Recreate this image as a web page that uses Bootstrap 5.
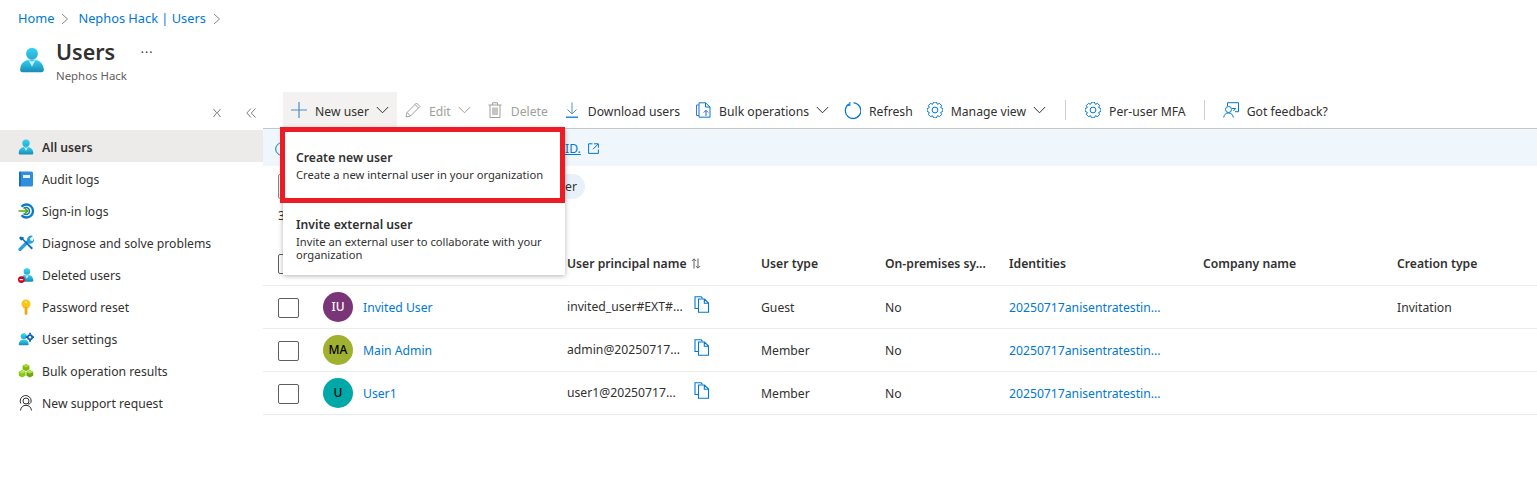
<!DOCTYPE html>
<html lang="en">
<head>
    <meta charset="UTF-8">
    <meta name="viewport" content="width=device-width, initial-scale=1.0">
    <title>Users - Nephos Hack</title>
    <link href="https://cdn.jsdelivr.net/npm/bootstrap@5.3.2/dist/css/bootstrap.min.css" rel="stylesheet">
    <style>
        html, body {
            height: 100%;
            overflow: hidden;
        }
        body {
            font-family: "Noto Sans", "Open Sans", sans-serif;
            font-size: 12.2px;
            color: #323130;
        }
        a {
            color: #0078d4;
            text-decoration: none;
        }
        .icon-defs {
            position: absolute;
            width: 0;
            height: 0;
        }
        .page-head {
            height: 92px;
            padding: 9px 18px 0;
        }
        .page-head .breadcrumb {
            --bs-breadcrumb-margin-bottom: 0;
            --bs-breadcrumb-item-padding-x: 0;
            --bs-breadcrumb-divider: "";
            line-height: 18px;
            font-size: 12.8px;
        }
        .page-head .breadcrumb-item + .breadcrumb-item::before {
            content: none;
        }
        .crumb-sep {
            width: 8px;
            height: 12px;
            margin: 0 9px 0 7px;
            vertical-align: -2px;
        }
        .head-row {
            margin-top: 11px;
            gap: 11px;
        }
        .head-icon {
            width: 26px;
            height: 30px;
            margin: 7px 0 0 1px;
        }
        .head-title {
            font-size: 21.5px;
            font-weight: 600;
            line-height: 28px;
            margin: 0;
        }
        .head-sub {
            color: #605e5c;
            font-size: 11.4px;
            line-height: 19px;
        }
        .head-more {
            margin: 4px 0 0 3px;
            line-height: 22px;
            font-size: 12px;
            letter-spacing: 1px;
        }
        .side-col {
            width: 263px;
            flex: none;
        }
        .side-tools {
            height: 38px;
            padding: 4px 7px 0 0;
            gap: 24px;
        }
        .side-tools svg {
            width: 10px;
            height: 10px;
        }
        .side-nav .list-group-item {
            height: 32px;
            border: 0;
            padding: 4px 0 0 18px;
            gap: 8px;
            color: #323130;
            background: transparent;
        }
        .side-nav .list-group-item.active {
            background: #edebe9;
            font-weight: 600;
        }
        .side-nav svg {
            width: 16px;
            height: 16px;
            flex: none;
            margin-top: -3px;
        }
        .main-col {
            min-width: 0;
        }
        .cmd-bar {
            height: 37px;
            border-bottom: 1px solid #c8c6c4;
        }
        .cmd-new {
            margin-left: 20px;
        }
        .cmd-bar .btn {
            --bs-btn-border-width: 0;
            --bs-btn-border-radius: 0;
            --bs-btn-font-size: 12.2px;
            --bs-btn-color: #323130;
            --bs-btn-disabled-color: #a19f9d;
            --bs-btn-disabled-opacity: 1;
            height: 36px;
            padding: 4px 8px 0;
            gap: 8px;
            white-space: nowrap;
        }
        .cmd-bar .btn.is-open {
            background: #f3f2f1;
        }
        .cmd-bar .btn svg {
            width: 16px;
            height: 16px;
            flex: none;
            margin-top: -4px;
        }
        .cmd-bar .btn svg.chev {
            width: 13px;
            height: 8px;
            margin-left: -1px;
        }
        .cmd-bar .btn.cmd-bulk {
            margin-left: -1px;
        }
        .cmd-bar .btn.cmd-refresh {
            margin-left: -1px;
        }
        .cmd-bar .btn.cmd-refresh svg {
            width: 17px;
            height: 17px;
        }
        .cmd-bar .btn.cmd-manage {
            margin-left: -2px;
        }
        .cmd-sep {
            width: 1px;
            height: 20px;
            background: #d2d0ce;
            margin: 0 11px;
        }
        .cmd-sep.is-narrow {
            margin: 0 10px;
        }
        .new-menu {
            width: 282px;
            height: 147px;
            top: 36px;
            left: 0;
            padding: 0;
            border: 0;
            border-radius: 0;
            box-shadow: 0 1px 5px rgba(0, 0, 0, .3);
            z-index: 5;
        }
        .new-menu .dropdown-item {
            padding: 0 13px;
            color: #323130;
            white-space: normal;
        }
        .new-menu .dropdown-item:first-child {
            height: 74px;
            padding-top: 21px;
        }
        .new-menu .dropdown-item:last-child {
            height: 73px;
            padding-top: 14px;
        }
        .menu-title {
            display: block;
            font-size: 12.2px;
            font-weight: 600;
            line-height: 18px;
        }
        .menu-desc {
            display: block;
            font-size: 11.2px;
            line-height: 12.5px;
            margin-top: 2px;
        }
        .red-box {
            position: absolute;
            top: 35px;
            left: -3px;
            width: 285px;
            height: 76px;
            border: 5px solid #ed1c24;
            z-index: 6;
            pointer-events: none;
        }
        .info-bar {
            height: 37px;
            background: #eff6fc;
            padding: 2px 0 0 12px;
        }
        .info-bar a {
            text-decoration: underline;
            margin: 2px 7px 0 276px;
        }
        .info-bar svg {
            width: 14px;
            height: 14px;
            flex: none;
        }
        .info-bar svg.ext-link {
            width: 11px;
            height: 11px;
        }
        .filter-row {
            margin: 8px 0 0 15px;
            height: 25px;
            gap: 12px;
        }
        .search-box {
            width: 187px;
            height: 25px;
            border: 1px solid #8a8886;
            border-radius: 2px;
        }
        .filter-pill {
            width: 108px;
            height: 25px;
            border-radius: 13px;
            background: #e8f1fa;
            padding-right: 8px;
            text-align: right;
            line-height: 25px;
        }
        .found-text {
            margin: 8px 0 0 15px;
            line-height: 18px;
        }
        .user-table {
            table-layout: fixed;
            width: 1274px;
            margin: 16px 0 0;
            --bs-table-color: #323130;
        }
        .user-table th,
        .user-table td {
            padding: 3px 0 0;
            vertical-align: middle;
            white-space: nowrap;
            border-bottom: 1px solid #edebe9;
        }
        .user-table th {
            height: 44px;
            font-weight: 600;
        }
        .user-table td {
            height: 43px;
        }
        .user-table th:first-child,
        .user-table td:first-child {
            padding-left: 15px;
        }
        .user-table .form-check-input {
            display: block;
            width: 21px;
            height: 20px;
            margin: 0;
            border: 1px solid #605e5c;
            border-radius: 2px;
        }
        .col-check { width: 60px; }
        .col-name { width: 244px; }
        .col-upn { width: 194px; }
        .col-type { width: 124px; }
        .col-sync { width: 124px; }
        .col-ident { width: 194px; }
        .col-company { width: 194px; }
        .user-avatar {
            width: 30px;
            height: 30px;
            border-radius: 50%;
            margin: -3px 10px 0 0;
            font-size: 12px;
            font-weight: 500;
            flex: none;
        }
        .av-purple { background: #7a3578; color: #fff; }
        .av-olive { background: #a0b12f; color: #000; }
        .av-teal { background: #00a8a8; color: #000; }
        .upn-text {
            width: 127px;
            margin-top: -2px;
        }
        .copy-icon {
            width: 16px;
            height: 17px;
            margin-top: -6px;
        }
        .sort-icon {
            width: 10px;
            height: 11px;
            margin-left: 4px;
            vertical-align: -1px;
        }
    </style>
</head>
<body>
    <svg class="icon-defs" aria-hidden="true">
        <defs>
            <linearGradient id="gBody" x1="0" y1="0" x2="0" y2="1">
                <stop offset="0" stop-color="#32d4f5"/>
                <stop offset="1" stop-color="#198ab3"/>
            </linearGradient>
            <linearGradient id="gHead" x1="0" y1="0" x2="0" y2="1">
                <stop offset="0" stop-color="#32d4f5"/>
                <stop offset="1" stop-color="#2aa8d0"/>
            </linearGradient>
            <symbol id="i-person" viewBox="0 0 18 18">
                <path d="M15.7 17.5c.8 0 1.5-.7 1.5-1.5v-.5C16.6 11.3 14.4 8.6 9 8.6s-7.8 2.6-8.2 6.9V16c0 .9.7 1.5 1.4 1.5z" fill="url(#gBody)"/>
                <circle cx="9" cy="4.7" r="4.1" fill="url(#gHead)"/>
                <path d="M6.6 9 9 13.6 11.4 9 9 10z" fill="#fff" opacity=".75"/>
            </symbol>
            <symbol id="i-gear" viewBox="1 1 16 16">
                <polygon points="16.88,10.39 14.73,11.37 15.55,13.59 13.59,15.55 11.37,14.73 10.39,16.88 7.61,16.88 6.63,14.73 4.41,15.55 2.45,13.59 3.27,11.37 1.12,10.39 1.12,7.61 3.27,6.63 2.45,4.41 4.41,2.45 6.63,3.27 7.61,1.12 10.39,1.12 11.37,3.27 13.59,2.45 15.55,4.41 14.73,6.63 16.88,7.61" fill="none" stroke="#0078d4" stroke-width="1" stroke-linejoin="round"/>
                <circle cx="9" cy="9" r="2.9" fill="none" stroke="#0078d4" stroke-width="1"/>
            </symbol>
            <symbol id="i-chev" viewBox="0 0 13 8">
                <path d="M.8 1 6.5 6.8 12.2 1" fill="none" stroke="currentColor" stroke-width="1"/>
            </symbol>
            <symbol id="i-copy" viewBox="0 0 16 17">
                <path d="M4.500 12.500H1V.8h6.200l1.300 1.600" fill="none" stroke="#0078d4" stroke-width="1.100"/>
                <path d="M4.500 3h6l4 4v9.300h-10zM10.300 3v4.200h4.200" fill="none" stroke="#0078d4" stroke-width="1.100"/>
            </symbol>
        </defs>
    </svg>

    <header class="page-head">
        <nav aria-label="breadcrumb">
            <ol class="breadcrumb">
                <li class="breadcrumb-item"><a href="#">Home</a><svg class="crumb-sep" viewBox="0 0 8 12"><path d="M1 1l5.500 5L1 11" fill="none" stroke="#8a8886"/></svg></li>
                <li class="breadcrumb-item"><a href="#">Nephos Hack | Users</a><svg class="crumb-sep" viewBox="0 0 8 12"><path d="M1 1l5.500 5L1 11" fill="none" stroke="#8a8886"/></svg></li>
            </ol>
        </nav>
        <div class="d-flex head-row">
            <svg class="head-icon" viewBox="0 0 18 18"><use href="#i-person"/></svg>
            <div>
                <h1 class="head-title">Users</h1>
                <div class="head-sub">Nephos Hack</div>
            </div>
            <div class="head-more">···</div>
        </div>
    </header>

    <div class="d-flex">
        <aside class="side-col">
            <div class="side-tools d-flex align-items-center justify-content-end">
                <svg viewBox="0 0 10 10"><path d="M1.500 1l3.200 3.800L1.500 9M8.500 1 5.300 4.800 8.500 9" fill="none" stroke="#605e5c" stroke-width=".8"/></svg>
                <svg viewBox="0 0 10 10"><path d="M5 .5.8 5 5 9.500M9.500.5 5.300 5l4.200 4.500" fill="none" stroke="#605e5c" stroke-width=".8"/></svg>
            </div>
            <div class="list-group list-group-flush side-nav">
                <a href="#" class="list-group-item active d-flex align-items-center">
                    <svg viewBox="0 0 18 18"><use href="#i-person"/></svg>All users
                </a>
                <a href="#" class="list-group-item d-flex align-items-center">
                    <svg viewBox="0 0 16 16"><rect x="1" y=".5" width="14" height="15" rx="1.500" fill="#2f8fdc"/><rect x="1" y=".5" width="2" height="15" rx="1" fill="#1a6dba"/><rect x="5" y="4" width="7" height="3" fill="#e8f3fb"/></svg>Audit logs
                </a>
                <a href="#" class="list-group-item d-flex align-items-center">
                    <svg viewBox="0 0 16 16"><path d="M3.500 3.800A6.500 6.500 0 1 1 3.500 12.200" fill="none" stroke="#0a78cc" stroke-width="2.300"/><path d="M5.500 5.600a3.500 3.500 0 1 1 0 4.800" fill="none" stroke="#0a78cc" stroke-width="1.400"/><path d="M.5 8h8.500M6.500 5l3.200 3-3.200 3" fill="none" stroke="#5ea80d" stroke-width="1.700"/></svg>Sign-in logs
                </a>
                <a href="#" class="list-group-item d-flex align-items-center">
                    <svg viewBox="0 0 16 16"><path d="M2 14.500 10 6.500" stroke="#2a9fd8" stroke-width="3.200" stroke-linecap="round" fill="none"/><path d="M9 5a4.200 4.200 0 0 1 6-4l-3 2.500.5 2L14.500 6 16 3.500A4.200 4.200 0 0 1 10.500 8.500z" fill="#2a9fd8"/><path d="M2.500 1.500 1 3l2 2.500 1.500-.5 9 9.500 1.500-1.500-9.500-9 .5-1.500z" fill="#0a6fc2"/></svg>Diagnose and solve problems
                </a>
                <a href="#" class="list-group-item d-flex align-items-center">
                    <svg viewBox="0 0 18 18"><use href="#i-person" x="2" width="16"/><circle cx="3.800" cy="14.200" r="3.800" fill="#d5001c"/><rect x="1.800" y="13.500" width="4" height="1.400" fill="#fff"/></svg>Deleted users
                </a>
                <a href="#" class="list-group-item d-flex align-items-center">
                    <svg viewBox="0 0 16 16"><circle cx="8" cy="5" r="4.500" fill="#fcc419"/><path d="M6.600 8h2.800v7.200L8 16l-1.400-.8z" fill="#f5a70e"/><circle cx="8" cy="3.200" r="1" fill="#fff3c4"/></svg>Password reset
                </a>
                <a href="#" class="list-group-item d-flex align-items-center">
                    <svg viewBox="0 0 18 18"><path d="M11 16c.6 0 1-.4 1-1-.4-3.500-2-5.500-5.500-5.500S1.200 11.500.8 15c0 .6.400 1 1 1z" fill="url(#gBody)"/><circle cx="6.500" cy="6" r="3.400" fill="url(#gHead)"/><g fill="#0a5fb8"><circle cx="13.500" cy="7" r="3.400"/><path d="M12.500 2h2v2h-2zM12.500 10h2v2h-2zM8.700 6h2v2h-2zM16 6h2v2h-2z"/></g><circle cx="13.500" cy="7" r="1.400" fill="#fff"/></svg>User settings
                </a>
                <a href="#" class="list-group-item d-flex align-items-center">
                    <svg viewBox="0 0 18 18"><path d="M9 1l3.800 2v4.300L9 9.300 5.200 7.300V3z" fill="#7fba00"/><path d="M4.700 8 8.500 10v4.300L4.700 16.300.9 14.300V10z" fill="#86c91a"/><path d="M13.300 8l3.800 2v4.300l-3.800 2-3.800-2V10z" fill="#6fa80a"/><path d="M5.200 3 9 5l3.800-2L9 1z" fill="#a5dc3b"/><path d="M.9 10l3.800 2 3.800-2-3.800-2zM9.500 10l3.800 2 3.800-2-3.800-2z" fill="#b0e04e"/></svg>Bulk operation results
                </a>
                <a href="#" class="list-group-item d-flex align-items-center">
                    <svg viewBox="0 0 16 16" fill="none" stroke="#323130"><circle cx="8" cy="6" r="3"/><path d="M2.800 8.500A5.500 5.500 0 1 1 13.200 6M2.500 15.500C3 12 5 10.300 8 10.300s5 1.700 5.500 5.200M13.200 6c0 2-1.500 3-3.200 3"/></svg>New support request
                </a>
            </div>
        </aside>

        <main class="main-col flex-grow-1">
            <div class="cmd-bar d-flex align-items-center">
                <div class="dropdown position-relative cmd-new">
                    <button class="btn is-open d-flex align-items-center" type="button">
                        <svg viewBox="0 0 16 16"><path d="M8 0v16M0 8h16" stroke="#4a8fcb" stroke-width="1.200" fill="none"/></svg>
                        <span>New user</span>
                        <svg class="chev"><use href="#i-chev"/></svg>
                    </button>
                    <div class="dropdown-menu show new-menu">
                        <a class="dropdown-item" href="#">
                            <span class="menu-title">Create new user</span>
                            <span class="menu-desc">Create a new internal user in your organization</span>
                        </a>
                        <a class="dropdown-item" href="#">
                            <span class="menu-title">Invite external user</span>
                            <span class="menu-desc">Invite an external user to collaborate with your organization</span>
                        </a>
                    </div>
                    <div class="red-box"></div>
                </div>
                <button class="btn d-flex align-items-center" type="button" disabled>
                    <svg viewBox="0 0 16 16" fill="none" stroke="#a19f9d"><path d="M1 15l1-4.500L11.500 1l3.500 3.500L5.500 14zM2 10.500 5.500 14M10 2.500 13.500 6"/></svg>
                    <span>Edit</span>
                    <svg class="chev"><use href="#i-chev"/></svg>
                </button>
                <button class="btn d-flex align-items-center" type="button" disabled>
                    <svg viewBox="0 0 16 16" fill="none" stroke="#a19f9d"><path d="M1.500 3h13M3 3v12.500h10V3M5.500 3V.8h5V3"/><path d="M6 5.500v7.500M8 5.500v7.500M10 5.500v7.500" stroke-width="1.200"/></svg>
                    <span>Delete</span>
                </button>
                <button class="btn d-flex align-items-center" type="button">
                    <svg viewBox="0 0 16 16" fill="none" stroke="#0078d4"><path d="M8 .5v11M3.500 7.500 8 12l4.500-4.500" stroke="#5a8fc8"/><path d="M2 15.200h12" stroke-width="1.300"/></svg>
                    <span>Download users</span>
                </button>
                <button class="btn cmd-bulk d-flex align-items-center" type="button">
                    <svg viewBox="0 0 16 16" fill="none" stroke="#0078d4"><path d="M4 .8h6.500L15 5v10.200H4z"/><path d="M10.500.8V5H15"/><path d="M4 3H1.500v10.500H4" stroke="#4a6fd8"/><path d="M11 14V8.500M8.800 10.500 11 8.300l2.200 2.200" stroke="#2a5fc8"/></svg>
                    <span>Bulk operations</span>
                    <svg class="chev"><use href="#i-chev"/></svg>
                </button>
                <button class="btn cmd-refresh d-flex align-items-center" type="button">
                    <svg viewBox="0 0 16 16" fill="none" stroke="#0078d4" stroke-width="1.200"><path d="M5 1.800A7.300 7.300 0 1 0 9 .9"/><path d="M5.500 0v3H2.500" stroke-width="1"/></svg>
                    <span>Refresh</span>
                </button>
                <button class="btn cmd-manage d-flex align-items-center" type="button">
                    <svg><use href="#i-gear"/></svg>
                    <span>Manage view</span>
                    <svg class="chev"><use href="#i-chev"/></svg>
                </button>
                <span class="cmd-sep"></span>
                <button class="btn d-flex align-items-center" type="button">
                    <svg><use href="#i-gear"/></svg>
                    <span>Per-user MFA</span>
                </button>
                <span class="cmd-sep is-narrow"></span>
                <button class="btn d-flex align-items-center" type="button">
                    <svg viewBox="0 0 16 16" fill="none" stroke="#0078d4"><path d="M4.500 4V.7h11v9h-3.500M9 6.500h3.500M12.500 6.500l-2 2.500"/><circle cx="5.500" cy="7.500" r="3"/><path d="M.7 15.500c.3-2.800 2.200-4.500 4.800-4.500s4.500 1.700 4.800 4.500"/></svg>
                    <span>Got feedback?</span>
                </button>
            </div>

            <div class="info-bar d-flex align-items-center">
                <svg viewBox="0 0 14 14"><circle cx="7" cy="7" r="6.300" fill="none" stroke="#0078d4"/></svg>
                <a href="#">ID.</a>
                <svg class="ext-link" viewBox="0 0 11 11" fill="none" stroke="#0078d4"><path d="M4.500.8H.6v9.600h9.800V6.500M6 .8h4.400v4M10.200 1 5 6.200"/></svg>
            </div>

            <div class="filter-row d-flex">
                <div class="search-box"></div>
                <div class="filter-pill">er</div>
            </div>
            <div class="found-text">3</div>

            <table class="table user-table">
                <colgroup>
                    <col class="col-check"><col class="col-name"><col class="col-upn"><col class="col-type"><col class="col-sync"><col class="col-ident"><col class="col-company"><col>
                </colgroup>
                <thead>
                    <tr>
                        <th><input class="form-check-input" type="checkbox" aria-label="Select all"></th>
                        <th></th>
                        <th>User principal name<svg class="sort-icon" viewBox="0 0 10 11" fill="none" stroke="#605e5c"><path d="M3 10.500V1M.8 3 3 .8 5.200 3M7 .5V10M4.800 8 7 10.200 9.200 8"/></svg></th>
                        <th>User type</th>
                        <th>On-premises sy...</th>
                        <th>Identities</th>
                        <th>Company name</th>
                        <th>Creation type</th>
                    </tr>
                </thead>
                <tbody>
                    <tr>
                        <td><input class="form-check-input" type="checkbox" aria-label="Select Invited User"></td>
                        <td><div class="d-flex align-items-center"><span class="user-avatar av-purple d-flex align-items-center justify-content-center">IU</span><a href="#">Invited User</a></div></td>
                        <td><div class="d-flex align-items-center"><span class="upn-text">invited_user#EXT#...</span><svg class="copy-icon"><use href="#i-copy"/></svg></div></td>
                        <td>Guest</td>
                        <td>No</td>
                        <td><a href="#">20250717anisentratestin...</a></td>
                        <td></td>
                        <td>Invitation</td>
                    </tr>
                    <tr>
                        <td><input class="form-check-input" type="checkbox" aria-label="Select Main Admin"></td>
                        <td><div class="d-flex align-items-center"><span class="user-avatar av-olive d-flex align-items-center justify-content-center">MA</span><a href="#">Main Admin</a></div></td>
                        <td><div class="d-flex align-items-center"><span class="upn-text">admin@20250717...</span><svg class="copy-icon"><use href="#i-copy"/></svg></div></td>
                        <td>Member</td>
                        <td>No</td>
                        <td><a href="#">20250717anisentratestin...</a></td>
                        <td></td>
                        <td></td>
                    </tr>
                    <tr>
                        <td><input class="form-check-input" type="checkbox" aria-label="Select User1"></td>
                        <td><div class="d-flex align-items-center"><span class="user-avatar av-teal d-flex align-items-center justify-content-center">U</span><a href="#">User1</a></div></td>
                        <td><div class="d-flex align-items-center"><span class="upn-text">user1@20250717...</span><svg class="copy-icon"><use href="#i-copy"/></svg></div></td>
                        <td>Member</td>
                        <td>No</td>
                        <td><a href="#">20250717anisentratestin...</a></td>
                        <td></td>
                        <td></td>
                    </tr>
                </tbody>
            </table>
        </main>
    </div>

    <script src="https://cdn.jsdelivr.net/npm/bootstrap@5.3.2/dist/js/bootstrap.bundle.min.js"></script>
</body>
</html>
